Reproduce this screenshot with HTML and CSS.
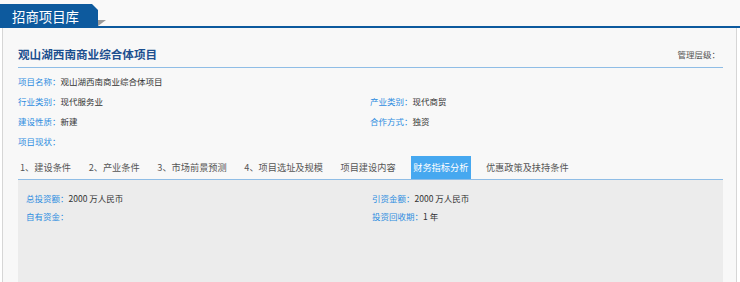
FILE: index.html
```html
<!DOCTYPE html>
<html lang="zh-CN">
<head>
    <meta charset="UTF-8">
    <title>招商项目库</title>
    <link rel="stylesheet" href="styles.css">
</head>
<body>

    <div class="header">
        <div class="header-tab">招商项目库</div>
    </div>

    <div class="panel">
        <div class="title-row">
            <h2>观山湖西南商业综合体项目</h2>
            <span class="level">管理层级：</span>
        </div>

        <div class="info">
            <div class="field full"><span class="label">项目名称：</span>观山湖西南商业综合体项目</div>
            <div class="field"><span class="label">行业类别：</span>现代服务业</div>
            <div class="field"><span class="label">产业类别：</span>现代商贸</div>
            <div class="field"><span class="label">建设性质：</span>新建</div>
            <div class="field"><span class="label">合作方式：</span>独资</div>
            <div class="field full"><span class="label">项目现状：</span></div>
        </div>

        <ul class="tabs">
            <li>1、建设条件</li>
            <li>2、产业条件</li>
            <li>3、市场前景预测</li>
            <li>4、项目选址及规模</li>
            <li>项目建设内容</li>
            <li class="active">财务指标分析</li>
            <li>优惠政策及扶持条件</li>
        </ul>

        <div class="tab-body">
            <div class="field"><span class="label">总投资额：</span>2000 万人民币</div>
            <div class="field"><span class="label">引资金额：</span>2000 万人民币</div>
            <div class="field"><span class="label">自有资金：</span></div>
            <div class="field"><span class="label">投资回收期：</span>1 年</div>
        </div>
    </div>

</body>
</html>
```

FILE: styles.css
```css
body {
    margin: 0;
    background: #fff;
    font-family: "Noto Sans CJK SC", "Liberation Sans", sans-serif;
    color: #333;
}
.header {
    position: relative;
    height: 28px;
    background: #f9f9f9;
    box-sizing: border-box;
    padding-top: 4px;
}
.header::before {
    content: "";
    position: absolute;
    left: 0;
    right: 0;
    bottom: 0;
    height: 2px;
    background: #0d5a9e;
}
.header::after {
    content: "";
    position: absolute;
    left: 98px;
    top: 20px;
    border-top: 6px solid #9a9a9a;
    border-right: 8px solid transparent;
}
.header-tab {
    position: relative;
    width: 98px;
    height: 24px;
    box-sizing: border-box;
    padding-left: 12px;
    background: #0d5a9e;
    color: #fff;
    font-size: 13.4px;
    line-height: 24px;
    clip-path: polygon(0 0, 92px 0, 98px 6px, 98px 100%, 0 100%);
}
.panel {
    margin-left: 2px;
    width: 735px;
    box-sizing: border-box;
    padding: 0 13px 0 15px;
    background: #f8f8f8;
    border-left: 1px solid #d6d6d6;
    border-right: 1px solid #d6d6d6;
}
.title-row {
    display: flex;
    justify-content: space-between;
    align-items: center;
    padding: 18px 0 5px;
    border-bottom: 1px solid #8fbde6;
}
.title-row h2 {
    margin: 0;
    font-size: 11.6px;
    line-height: 16px;
    font-weight: bold;
    color: #1c4f8f;
}
.level {
    font-size: 8.5px;
    color: #555;
    margin-right: 3px;
}
.info {
    display: grid;
    grid-template-columns: 352px 1fr;
    margin-top: 3px;
}
.field {
    font-size: 8.5px;
    line-height: 20px;
    color: #333;
}
.field.full {
    grid-column: 1 / 3;
}
.label {
    color: #2d8ce0;
}
.tabs {
    display: flex;
    list-style: none;
    margin: 5px 0 0;
    padding: 0;
    border-bottom: 1px solid #8fbde6;
}
.tabs li {
    padding: 0 2.5px;
    margin-right: 12.6px;
    font-size: 9.2px;
    line-height: 23px;
    color: #555;
}
.tabs li:first-child {
    margin-left: -0.5px;
}
.tabs li.active {
    background: #46a8f0;
    color: #fff;
}
.tab-body {
    display: grid;
    grid-template-columns: 346px 1fr;
    align-content: start;
    height: 93px;
    padding: 9px 0 0 8px;
    background: #ececec;
}
.tab-body .field {
    line-height: 18px;
}
```
